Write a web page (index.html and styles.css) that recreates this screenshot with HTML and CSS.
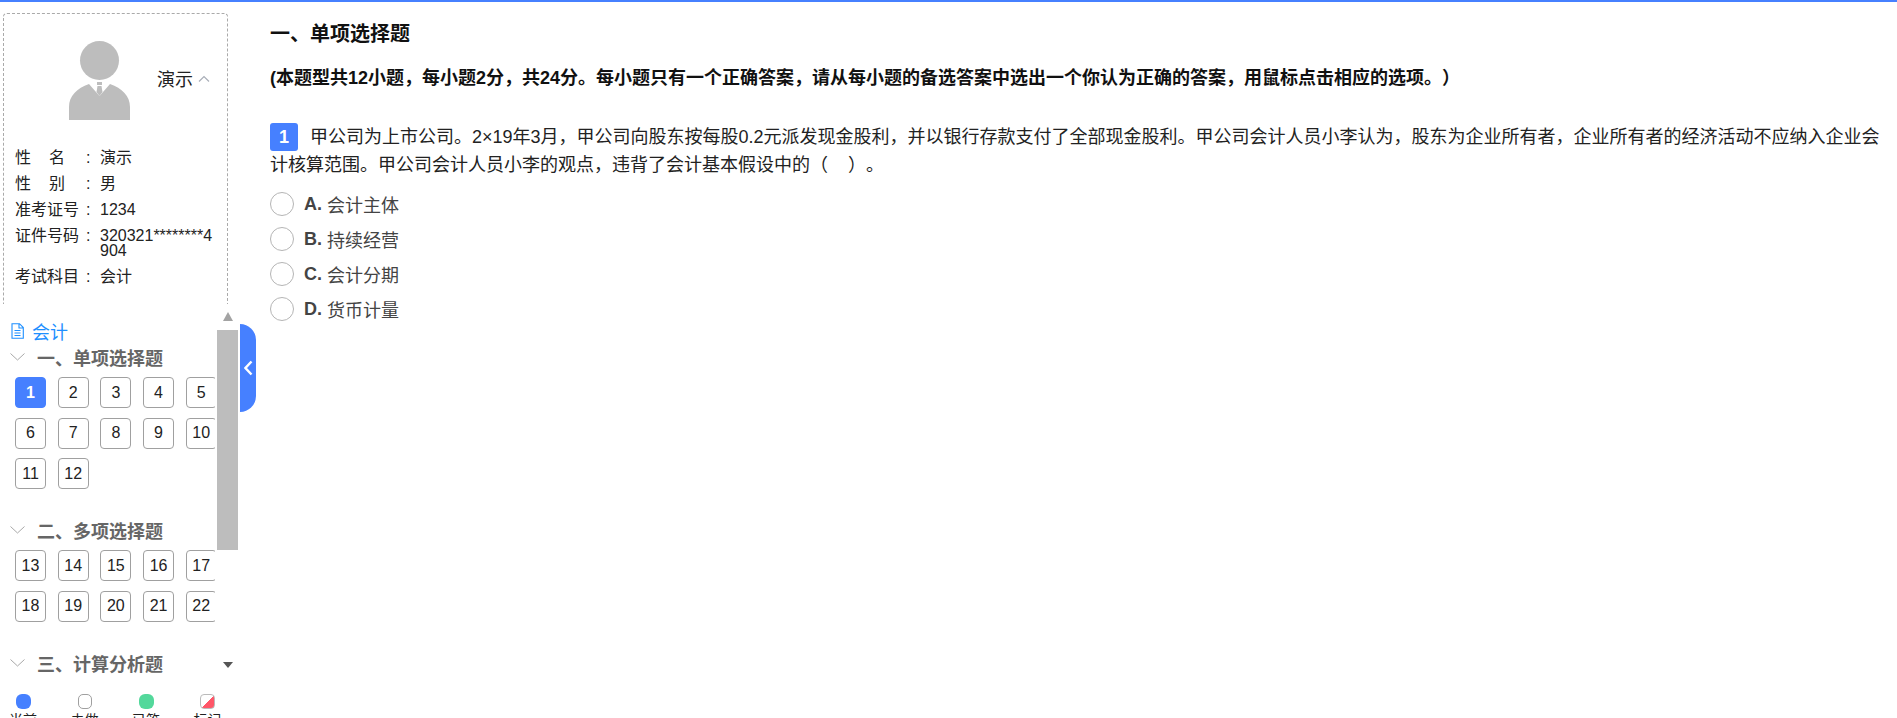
FILE: index.html
```html
<!DOCTYPE html>
<html lang="zh-CN">
<head>
  <meta charset="UTF-8" />
  <title>考试</title>
  <link rel="stylesheet" href="styles.css">
</head>
<body>
  <div class="page">
    <aside class="side">
      <!-- candidate info -->
      <div class="info">
        <div class="user">
          <svg class="avatar" viewBox="0 0 61 79">
            <circle cx="30.5" cy="19.5" r="19.5" fill="#bdbdbd"/>
            <path d="M0 79V66C0 55 8 47 20 43L30.5 55 41 43C53 47 61 55 61 66V79Z" fill="#bdbdbd"/>
            <path d="M28 41h5v3h-5zM28.500 45h4l1 6-3 4-3-4z" fill="#bdbdbd"/>
          </svg>
          <span class="user-name">演示</span>
          <svg class="user-arrow" viewBox="0 0 12 7"><path d="M1 6.500 6 1.500l5 5" fill="none" stroke="#a9aeb8" stroke-width="1.200"/></svg>
        </div>
        <div class="info-row"><span class="info-label spaced"><i>性</i><i>名</i></span><span class="colon">:</span><span class="info-value">演示</span></div>
        <div class="info-row"><span class="info-label spaced"><i>性</i><i>别</i></span><span class="colon">:</span><span class="info-value">男</span></div>
        <div class="info-row"><span class="info-label">准考证号</span><span class="colon">:</span><span class="info-value">1234</span></div>
        <div class="info-row"><span class="info-label">证件号码</span><span class="colon">:</span><span class="info-value">320321********4904</span></div>
        <div class="info-row"><span class="info-label">考试科目</span><span class="colon">:</span><span class="info-value">会计</span></div>
      </div>

      <!-- question nav -->
      <div class="nav">
        <div class="nav-list">
          <div class="subject">
            <svg class="subject-icon" viewBox="0 0 13 16"><path d="M1 .700h7.500L12.300 4.500V15.300H1ZM8 1v4h4M3.500 7.500h6M3.500 10h6M3.500 12.500h6" fill="none" stroke="#1e8fff" stroke-width="1.100"/></svg>
            <span>会计</span>
          </div>

          <div class="group-title">
            <svg class="group-arrow" viewBox="0 0 15 8"><path d="M.500 .500 7.500 7l7-6.500" fill="none" stroke="#a8a8a8" stroke-width="1"/></svg>
            <span>一、单项选择题</span>
          </div>
          <div class="nums">
            <span class="num current">1</span><span class="num">2</span><span class="num">3</span><span class="num">4</span><span class="num">5</span>
            <span class="num">6</span><span class="num">7</span><span class="num">8</span><span class="num">9</span><span class="num">10</span>
            <span class="num">11</span><span class="num">12</span>
          </div>

          <div class="group-title">
            <svg class="group-arrow" viewBox="0 0 15 8"><path d="M.500 .500 7.500 7l7-6.500" fill="none" stroke="#a8a8a8" stroke-width="1"/></svg>
            <span>二、多项选择题</span>
          </div>
          <div class="nums">
            <span class="num">13</span><span class="num">14</span><span class="num">15</span><span class="num">16</span><span class="num">17</span>
            <span class="num">18</span><span class="num">19</span><span class="num">20</span><span class="num">21</span><span class="num">22</span>
          </div>

          <div class="group-title">
            <svg class="group-arrow" viewBox="0 0 15 8"><path d="M.500 .500 7.500 7l7-6.500" fill="none" stroke="#a8a8a8" stroke-width="1"/></svg>
            <span>三、计算分析题</span>
          </div>
        </div>
        <div class="scrollbar">
          <span class="scroll-up"></span>
          <span class="scroll-thumb"></span>
          <span class="scroll-down"></span>
        </div>
      </div>

      <div class="legend">
        <div class="legend-item"><span class="dot dot-current"></span>当前</div>
        <div class="legend-item"><span class="dot dot-todo"></span>未做</div>
        <div class="legend-item"><span class="dot dot-done"></span>已答</div>
        <div class="legend-item"><span class="dot dot-mark"></span>标记</div>
      </div>

      <div class="collapse">
        <svg viewBox="0 0 9 16"><path d="M7.500 1.500 1.500 8l6 6.500" fill="none" stroke="#fff" stroke-width="2.400"/></svg>
      </div>
    </aside>

    <main class="main">
      <h2 class="type-title">一、单项选择题</h2>
      <p class="type-note">(本题型共12小题，每小题2分，共24分。每小题只有一个正确答案，请从每小题的备选答案中选出一个你认为正确的答案，用鼠标点击相应的选项。）</p>
      <p class="question"><span class="q-no">1</span>甲公司为上市公司。2×19年3月，甲公司向股东按每股0.2元派发现金股利，并以银行存款支付了全部现金股利。甲公司会计人员小李认为，股东为企业所有者，企业所有者的经济活动不应纳入企业会计核算范围。甲公司会计人员小李的观点，违背了会计基本假设中的（&nbsp;&nbsp;&nbsp;&nbsp;）。</p>
      <div class="options">
        <label class="option"><span class="radio"></span><b>A.</b> 会计主体</label>
        <label class="option"><span class="radio"></span><b>B.</b> 持续经营</label>
        <label class="option"><span class="radio"></span><b>C.</b> 会计分期</label>
        <label class="option"><span class="radio"></span><b>D.</b> 货币计量</label>
      </div>
    </main>
  </div>
</body>
</html>
```

FILE: styles.css
```css
* {
  box-sizing: border-box;
}

html, body {
  height: 100%;
  margin: 0;
  overflow: hidden;
}

body {
  font-family: "Liberation Sans", "Noto Sans CJK SC", sans-serif;
  color: #222;
  background: #fff;
}

.page {
  display: flex;
  height: 718px;
  overflow: hidden;
  border-top: 2px solid #4680ff;
}

/* left column */
.side {
  position: relative;
  width: 270px;
  flex: none;
}

.info {
  width: 225px;
  height: 291px;
  margin: 11px 0 0 3px;
  padding: 0 8px 0 11px;
  border: 1px dashed #aaa;
  border-bottom: none;
  border-radius: 4px 4px 0 0;
  font-size: 16px;
  color: #222;
}

.user {
  display: flex;
  align-items: center;
  height: 100px;
  padding: 33px 0 0 54px;
  margin-bottom: 36px;
}

.avatar {
  width: 61px;
  height: 79px;
  flex: none;
}

.user-name {
  margin: 0 0 5px 27px;
  font-size: 18px;
}

.user-arrow {
  width: 12px;
  height: 7px;
  margin: 0 0 5px 5px;
}

.info-row {
  display: flex;
  margin-bottom: 11px;
  line-height: 15px;
}

.info-label {
  width: 67px;
  flex: none;
}

.spaced {
  display: flex;
  justify-content: space-between;
  padding-right: 17px;
}

.spaced i {
  font-style: normal;
}

.colon {
  width: 18px;
  flex: none;
  padding-left: 4px;
}

.info-value {
  width: 114px;
  word-break: break-all;
}

.nav {
  display: flex;
  width: 238px;
  height: 368px;
  margin-top: 6px;
}

.nav-list {
  width: 215px;
  overflow: hidden;
  padding-left: 10px;
}

.subject {
  display: flex;
  align-items: center;
  gap: 8px;
  height: 18px;
  margin: 12px 0 0 1px;
  font-size: 18px;
  color: #1e8fff;
}

.subject-icon {
  width: 13px;
  height: 16px;
}

.group-title {
  display: flex;
  align-items: center;
  gap: 12px;
  height: 24px;
  margin-top: 6px;
  padding-bottom: 2px;
  font-size: 18px;
  font-weight: bold;
  color: #666;
}

.group-arrow {
  width: 15px;
  height: 8px;
  flex: none;
}

.nums {
  display: grid;
  grid-template-columns: repeat(5, 31px);
  grid-auto-rows: 31px;
  column-gap: 11.7px;
  row-gap: 9.5px;
  width: 220px;
  margin: 7px 0 30px 5px;
}

.num {
  display: flex;
  align-items: center;
  justify-content: center;
  border: 1px solid #a0a0a0;
  border-radius: 4px;
  font-size: 16px;
  color: #222;
}

.num.current {
  border-color: #4680ff;
  background: #4680ff;
  color: #fff;
  font-weight: bold;
}

.scrollbar {
  display: flex;
  flex-direction: column;
  align-items: center;
  width: 21px;
  margin-left: 2px;
}

.scroll-up {
  width: 0;
  margin-top: 2px;
  border: 5.5px solid transparent;
  border-top: none;
  border-bottom: 9px solid #a3a3a3;
}

.scroll-thumb {
  width: 21px;
  height: 220px;
  margin-top: 9px;
  background: #bdbdbd;
}

.scroll-down {
  width: 0;
  margin-top: 112px;
  border: 5.5px solid transparent;
  border-bottom: none;
  border-top: 6px solid #555;
}

.legend {
  display: flex;
  width: 232px;
  margin-top: 16px;
  padding-left: 7px;
  font-size: 14px;
  line-height: 16px;
  color: #222;
}

.legend-item {
  display: flex;
  flex-direction: column;
  align-items: center;
  flex: none;
  width: 32px;
  margin-right: 29.5px;
  gap: 3px;
}

.dot {
  width: 15px;
  height: 15px;
  border-radius: 4px;
}

.dot-current {
  background: #4680ff;
  border-radius: 6px;
}

.dot-todo {
  width: 14px;
  border: 1px solid #a0a0a0;
  border-radius: 5px;
}

.dot-done {
  background: #53d89b;
  border-radius: 6px;
}

.dot-mark {
  border: 1px solid #bbb;
  background: linear-gradient(135deg, #fff 50%, #ff5668 50%);
}

.collapse {
  position: absolute;
  top: 322px;
  left: 240px;
  display: flex;
  align-items: center;
  justify-content: center;
  width: 16px;
  height: 88px;
  background: #4680ff;
  border-radius: 0 16px 16px 0;
}

.collapse svg {
  width: 9px;
  height: 16px;
}

/* question area */
.main {
  flex: 1;
  min-width: 0;
  padding-right: 12px;
  text-spacing-trim: space-all;
}

.type-title {
  margin: 21px 0 0;
  font-size: 20px;
  line-height: 22px;
  font-weight: bold;
  color: #111;
}

.type-note {
  margin: 22px 0 0;
  font-size: 18px;
  line-height: 22px;
  font-weight: bold;
  color: #111;
}

.question {
  margin: 34px 0 0;
  font-size: 18px;
  line-height: 28px;
  color: #222;
}

.q-no {
  display: inline-block;
  width: 28px;
  height: 28px;
  margin-right: 12px;
  border-radius: 3px;
  background: #4680ff;
  color: #fff;
  font-size: 18px;
  font-weight: bold;
  text-align: center;
  vertical-align: top;
}

.options {
  margin-top: 13px;
}

.option {
  display: flex;
  align-items: center;
  height: 24px;
  margin-bottom: 11px;
  font-size: 18px;
  color: #444;
  white-space: pre;
}

.radio {
  width: 24px;
  height: 24px;
  margin-right: 10px;
  border: 1px solid #b5b5b5;
  border-radius: 50%;
}
```
